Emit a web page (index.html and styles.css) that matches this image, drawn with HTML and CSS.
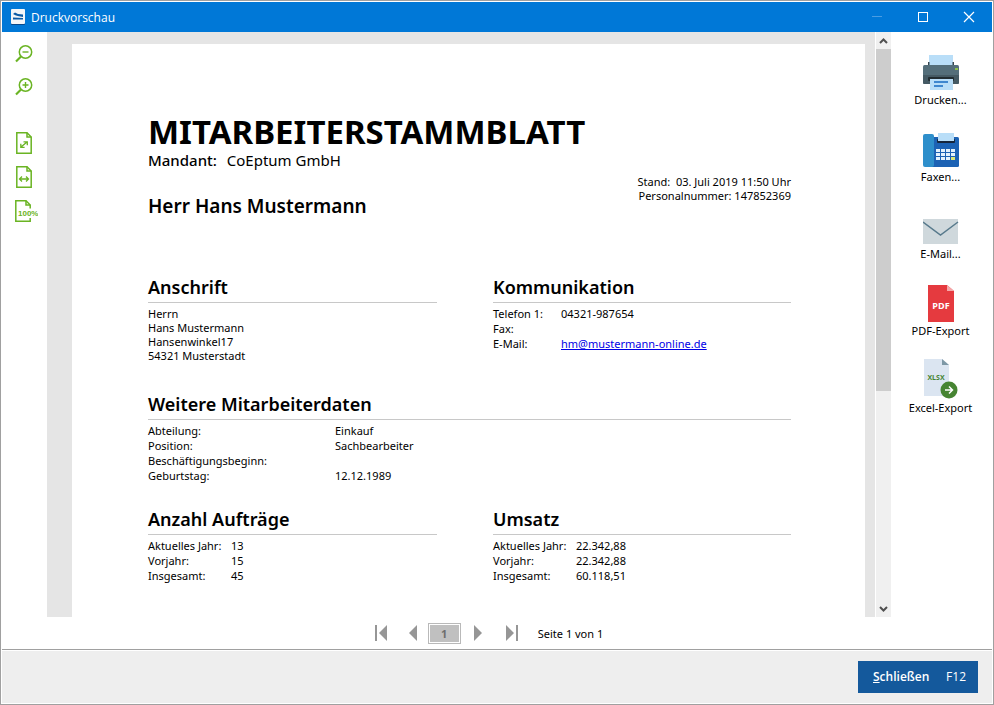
FILE: index.html
```html
<!DOCTYPE html>
<html lang="de">
<head>
    <meta charset="UTF-8">
    <meta name="viewport" content="width=device-width, initial-scale=1.0">
    <title>Druckvorschau</title>

    <link rel="stylesheet" href="styles.css">
</head>
<body>
    <div class="window">
        <header class="titlebar">
            <svg class="app-icon" width="14" height="16" viewBox="0 0 14 16">
                <rect y="1" width="14" height="15" rx="1" fill="#08488a"/>
                <rect width="14" height="15" rx="1" fill="#f4f6f8"/>
                <path d="M2 5l2-1.500 3 1.500 5 .5V8L8 7.200 5 6.500zM2 8.500l10 .5v1.500H2z" fill="#0b5aa5"/>
            </svg>
            <span class="title">Druckvorschau</span>
            <div class="window-buttons">
                <button type="button" aria-label="Minimieren">
                    <svg width="12" height="12"><path d="M1 5.500h10" stroke="#4a9de3"/></svg>
                </button>
                <button type="button" aria-label="Maximieren">
                    <svg width="12" height="12"><rect x="1.500" y="1.500" width="9" height="9" fill="none" stroke="#fff"/></svg>
                </button>
                <button type="button" aria-label="Fenster schließen">
                    <svg width="12" height="12"><path d="M1 1l10 10M11 1L1 11" stroke="#fff" stroke-width="1.200"/></svg>
                </button>
            </div>
        </header>

        <main class="main">
            <nav class="zoom-tools">
                <button type="button" aria-label="Verkleinern">
                    <svg width="18" height="18" viewBox="0 0 18 18" fill="none" stroke="#6ab423">
                        <circle cx="10.500" cy="7" r="6.200" stroke-width="1.500"/>
                        <path d="M6 11.500L1 16.500" stroke-width="2.200"/>
                        <path d="M7.500 7h6" stroke-width="1.400"/>
                    </svg>
                </button>
                <button type="button" aria-label="Vergrößern">
                    <svg width="18" height="18" viewBox="0 0 18 18" fill="none" stroke="#6ab423">
                        <circle cx="10.500" cy="7" r="6.200" stroke-width="1.500"/>
                        <path d="M6 11.500L1 16.500" stroke-width="2.200"/>
                        <path d="M7.500 7h6M10.500 4v6" stroke-width="1.400"/>
                    </svg>
                </button>
                <button type="button" class="page-tool first" aria-label="Ganze Seite">
                    <svg width="16" height="22" viewBox="0 0 16 22" fill="none" stroke="#6ab423" stroke-width="1.500">
                        <path d="M.8.8H11l4.200 4.200v16.200H.8z"/>
                        <path d="M11 .8V5h4.200"/>
                        <path d="M5 15l6-5M7.500 9.800h3.800v3.500M4.800 11.800v3.500h3.800" stroke-width="1.300"/>
                    </svg>
                </button>
                <button type="button" class="page-tool" aria-label="Seitenbreite">
                    <svg width="16" height="22" viewBox="0 0 16 22" fill="none" stroke="#6ab423" stroke-width="1.500">
                        <path d="M.8.8H11l4.200 4.200v16.200H.8z"/>
                        <path d="M11 .8V5h4.200"/>
                        <path d="M4 13h8M6 10.500L3.500 13 6 15.500M10 10.500l2.500 2.500L10 15.500" stroke-width="1.300"/>
                    </svg>
                </button>
                <button type="button" class="page-tool" aria-label="Originalgröße">
                    <svg width="28" height="22" viewBox="-3 0 28 22" fill="none" stroke="#6ab423" stroke-width="1.500">
                        <path d="M17.200 8.500V5L13 .8H2.800v20.400h14.400V18"/>
                        <path d="M13 .8V5h4.200"/>
                        <text x="5" y="16" class="zoom-label">100%</text>
                    </svg>
                </button>
            </nav>

            <div class="preview">
                <div class="viewer">
                    <div class="canvas">
                        <article class="sheet">
                            <div class="sheet-head">
                                <div>
                                    <h1>MITARBEITERSTAMMBLATT</h1>
                                    <p class="client"><b>Mandant:</b> CoEptum GmbH</p>
                                    <p class="employee">Herr Hans Mustermann</p>
                                </div>
                                <p class="meta">Stand:&nbsp; 03. Juli 2019 11:50 Uhr<br>Personalnummer: 147852369</p>
                            </div>

                            <div class="columns contact">
                                <section>
                                    <h2>Anschrift</h2>
                                    <address>Herrn<br>Hans Mustermann<br>Hansenwinkel17<br>54321 Musterstadt</address>
                                </section>
                                <section>
                                    <h2>Kommunikation</h2>
                                    <table class="phone">
                                        <tr><th>Telefon 1:</th><td>04321-987654</td></tr>
                                        <tr><th>Fax:</th><td></td></tr>
                                        <tr><th>E-Mail:</th><td><a href="mailto:hm@mustermann-online.de">hm@mustermann-online.de</a></td></tr>
                                    </table>
                                </section>
                            </div>

                            <section class="details">
                                <h2>Weitere Mitarbeiterdaten</h2>
                                <table class="wide">
                                    <tr><th>Abteilung:</th><td>Einkauf</td></tr>
                                    <tr><th>Position:</th><td>Sachbearbeiter</td></tr>
                                    <tr><th>Beschäftigungsbeginn:</th><td></td></tr>
                                    <tr><th>Geburtstag:</th><td>12.12.1989</td></tr>
                                </table>
                            </section>

                            <div class="columns">
                                <section>
                                    <h2>Anzahl Aufträge</h2>
                                    <table class="figures">
                                        <tr><th>Aktuelles Jahr:</th><td>13</td></tr>
                                        <tr><th>Vorjahr:</th><td>15</td></tr>
                                        <tr><th>Insgesamt:</th><td>45</td></tr>
                                    </table>
                                </section>
                                <section>
                                    <h2>Umsatz</h2>
                                    <table class="figures">
                                        <tr><th>Aktuelles Jahr:</th><td>22.342,88</td></tr>
                                        <tr><th>Vorjahr:</th><td>22.342,88</td></tr>
                                        <tr><th>Insgesamt:</th><td>60.118,51</td></tr>
                                    </table>
                                </section>
                            </div>
                        </article>
                    </div>
                    <div class="scrollbar">
                        <button type="button" aria-label="Nach oben">
                            <svg width="9" height="6"><path d="M1 5l3.500-3.500L8 5" fill="none" stroke="#505050" stroke-width="2"/></svg>
                        </button>
                        <div class="track"><div class="thumb"></div></div>
                        <button type="button" aria-label="Nach unten">
                            <svg width="9" height="6"><path d="M1 1l3.500 3.500L8 1" fill="none" stroke="#505050" stroke-width="2"/></svg>
                        </button>
                    </div>
                </div>

                <div class="pager">
                    <button type="button" aria-label="Erste Seite">
                        <svg width="12" height="16"><path d="M0 0h2v16H0zM12 0v16L4 8z" fill="#969696"/></svg>
                    </button>
                    <button type="button" class="prev" aria-label="Vorherige Seite">
                        <svg width="8" height="16"><path d="M8 0v16L0 8z" fill="#969696"/></svg>
                    </button>
                    <button type="button" class="current">1</button>
                    <button type="button" class="next" aria-label="Nächste Seite">
                        <svg width="8" height="16"><path d="M0 0v16l8-8z" fill="#969696"/></svg>
                    </button>
                    <button type="button" aria-label="Letzte Seite">
                        <svg width="12" height="16"><path d="M10 0h2v16h-2zM0 0v16l8-8z" fill="#969696"/></svg>
                    </button>
                    <span class="page-info">Seite 1 von 1</span>
                </div>
            </div>

            <aside class="actions">
                <button type="button">
                    <svg width="36" height="36" viewBox="0 0 36 36">
                        <path d="M6 0h24v12H6z" fill="#b9def8"/>
                        <path d="M5 7h1.500v3H5zM29.500 7H31v3h-1.500z" fill="#37474f"/>
                        <rect y="10" width="36" height="19" rx="1.500" fill="#546e7a"/>
                        <path d="M0 20h36v7.500a1.500 1.500 0 0 1-1.500 1.500h-33A1.500 1.500 0 0 1 0 27.500z" fill="#455a64"/>
                        <rect x="5" y="22" width="26" height="4" rx="1" fill="#222d32"/>
                        <path d="M7 24h23v11H7z" fill="#b9def8"/>
                        <path d="M11 26h14v2H11zM11 30h9v2h-9z" fill="#3f87cf"/>
                        <path d="M32 13h3v2h-3z" fill="#8bc34a"/>
                    </svg>
                    Drucken...
                </button>
                <button type="button">
                    <svg width="36" height="36" viewBox="0 0 36 36">
                        <rect x="8" y="5" width="28" height="30" rx="1.500" fill="#1c62b4"/>
                        <rect x="0" y="2" width="11" height="33" rx="2" fill="#2e8fcb"/>
                        <rect x="14" y="7" width="18" height="4" rx="1" fill="#16263c"/>
                        <path d="M15 1h16v8H15z" fill="#b9def8"/>
                        <path d="M13 17h4v3h-4zM18 17h4v3h-4zM23 17h4v3h-4zM28 17h4v3h-4zM13 21h4v3h-4zM18 21h4v3h-4zM23 21h4v3h-4zM28 21h4v3h-4zM13 25h4v3h-4zM18 25h4v3h-4zM23 25h4v3h-4z" fill="#e3f2fd"/>
                        <path d="M28 25h4v3h-4z" fill="#dce775"/>
                    </svg>
                    Faxen...
                </button>
                <button type="button">
                    <svg width="36" height="36" viewBox="0 0 36 36">
                        <path d="M0 10h35v25H0z" fill="#cfd8dc"/>
                        <path d="M0 13l17.500 13L35 13" fill="none" stroke="#587a8c" stroke-width="1.500"/>
                    </svg>
                    E-Mail...
                </button>
                <button type="button">
                    <svg width="36" height="37" viewBox="0 0 36 37">
                        <path d="M5 0h19l7 6v31H5z" fill="#e53a3f"/>
                        <path d="M24 0l7 6h-7z" fill="#f5a9ab"/>
                        <text x="18" y="24" class="file-label pdf">PDF</text>
                    </svg>
                    PDF-Export
                </button>
                <button type="button">
                    <svg width="36" height="40" viewBox="0 0 36 40">
                        <path d="M1 0h18l7 6v31H1z" fill="#dbe5f1"/>
                        <path d="M19 0l7 6h-7z" fill="#7d98a6"/>
                        <text x="13" y="21" class="file-label xlsx">XLSX</text>
                        <circle cx="26" cy="31" r="8.500" fill="#468432"/>
                        <path d="M22 31h7M26 27.500l3.500 3.500-3.500 3.500" fill="none" stroke="#fff" stroke-width="1.500"/>
                    </svg>
                    Excel-Export
                </button>
            </aside>
        </main>

        <footer class="footer">
            <button type="button" class="close"><span><u>S</u>chließen</span><span class="key">F12</span></button>
        </footer>
    </div>
</body>
</html>
```
FILE: styles.css
```css
* {
    box-sizing: border-box;
}

body {
    margin: 0;
    background: #fff;
    color: #000;
    font-family: "Noto Sans", "Open Sans", sans-serif;
    font-size: 11px;
    line-height: 15px;
}

button {
    display: flex;
    align-items: center;
    justify-content: center;
    margin: 0;
    padding: 0;
    border: none;
    background: none;
    color: inherit;
    font: inherit;
    cursor: pointer;
}

svg {
    display: block;
    flex: none;
}

h1, h2, p {
    margin: 0;
}

.window {
    display: flex;
    flex-direction: column;
    height: 100vh;
    padding: 1px;
    border: 1px solid #a0a0a0;
}

/* Title bar */
.titlebar {
    display: flex;
    align-items: center;
    height: 30px;
    padding-left: 9px;
    background: #0078d7;
    color: #fff;
}

.title {
    flex: 1;
    margin-left: 6px;
    font-family: "Open Sans", sans-serif;
    font-size: 12px;
}

.window-buttons {
    display: flex;
}

.window-buttons button {
    width: 46px;
    height: 30px;
}

.main {
    display: flex;
    flex: 1;
    min-height: 0;
}

/* Left toolbar */
.zoom-tools {
    display: flex;
    flex-direction: column;
    align-items: center;
    width: 45px;
    padding: 13px 1px 0 0;
}

.zoom-tools button {
    height: 18px;
    margin-bottom: 15px;
}

.zoom-tools .page-tool {
    height: 22px;
    margin-bottom: 12px;
}

.zoom-tools .first {
    margin-top: 21px;
}

.zoom-label {
    font: bold 8px "Liberation Sans", sans-serif;
    fill: #6ab423;
    stroke: none;
}

/* Page preview */
.preview {
    display: flex;
    flex: 1;
    flex-direction: column;
    min-width: 0;
}

.viewer {
    display: flex;
    flex: 1;
    min-height: 0;
}

.canvas {
    flex: 1;
    overflow: hidden;
    padding: 12px 10px 0 25px;
    background: #e5e5e5;
}

.sheet {
    min-height: 100%;
    padding: 68px 74px 32px 76px;
    background: #fff;
}

.sheet-head {
    display: flex;
    align-items: flex-end;
    justify-content: space-between;
    height: 108px;
}

h1 {
    font-size: 33px;
    line-height: 40px;
    white-space: nowrap;
}

.client {
    font-size: 15px;
    line-height: 16px;
}

.client b {
    margin-right: 6px;
    font-weight: 500;
}

.employee {
    margin-top: 24px;
    font-size: 19px;
    font-weight: 600;
    line-height: 28px;
}

.meta {
    padding-bottom: 17px;
    line-height: 14px;
    text-align: right;
    white-space: nowrap;
}

.columns {
    display: grid;
    grid-template-columns: 289fr 298fr;
    gap: 56px;
}

.contact {
    margin-top: 53px;
}

.details {
    margin: 27px 0 22px;
}

h2 {
    margin-bottom: 3px;
    padding-bottom: 1px;
    border-bottom: 1px solid #c8c8c8;
    font-size: 18px;
    font-weight: 600;
    line-height: 28px;
}

address {
    padding-top: 1px;
    font-style: normal;
    line-height: 14px;
}

table {
    border-collapse: collapse;
}

th, td {
    height: 15px;
    padding: 0;
    font-weight: normal;
    text-align: left;
}

.phone th {
    width: 68px;
}

.wide th {
    width: 187px;
}

.figures th {
    width: 83px;
}

a {
    color: #0000e6;
}

/* Scrollbar */
.scrollbar {
    display: flex;
    flex-direction: column;
    width: 16px;
    border-left: 1px solid #fff;
    background: #f0f0f0;
}

.scrollbar button {
    height: 17px;
}

.track {
    flex: 1;
}

.thumb {
    height: 62%;
    background: #cdcdcd;
}

/* Page navigation */
.pager {
    display: flex;
    align-items: center;
    justify-content: center;
    height: 32px;
    padding-left: 40px;
}

.pager .prev {
    margin: 0 11px 0 22px;
}

.pager .next {
    margin: 0 24px 0 13px;
}

.pager .current {
    width: 33px;
    height: 21px;
    border: 1px solid #b9b9b9;
    background: #c0c0c0;
    box-shadow: inset 0 0 0 1px #fff;
    color: #6e6e6e;
    font-weight: bold;
}

.page-info {
    margin-left: 20px;
}

/* Export buttons */
.actions {
    width: 101px;
    padding: 19px 2px 0 0;
}

.actions button {
    flex-direction: column;
    justify-content: flex-end;
    gap: 1px;
    width: 100%;
    height: 56px;
    margin-bottom: 21px;
}

.file-label {
    font: bold 9px "Open Sans", sans-serif;
    text-anchor: middle;
}

.pdf {
    fill: #fff;
}

.xlsx {
    font-size: 7px;
    fill: #468432;
}

/* Footer */
.footer {
    display: flex;
    align-items: center;
    justify-content: flex-end;
    height: 54px;
    padding-right: 14px;
    border-top: 1px solid #a0a0a0;
    box-shadow: inset 0 1px #fff;
    background: #eee;
}

.close {
    justify-content: space-between;
    width: 120px;
    height: 32px;
    padding: 0 12px 0 15px;
    background: #14599c;
    color: #fff;
    font-family: "Open Sans", sans-serif;
    font-size: 12px;
    font-weight: 600;
}

.close .key {
    font-weight: normal;
}
```
